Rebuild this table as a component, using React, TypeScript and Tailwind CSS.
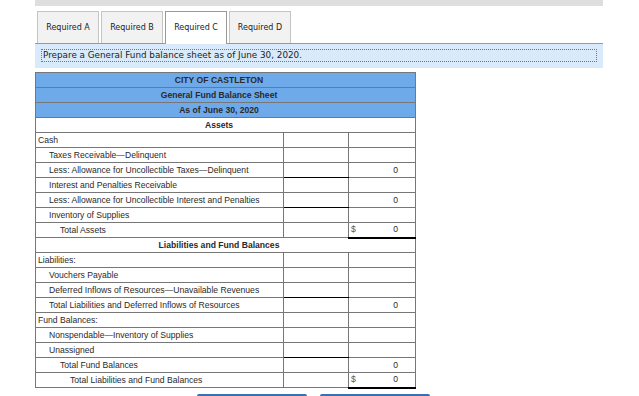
import React from 'react';

type Row = {
  label: string;
  indent?: number;
  span?: 'head' | 'section';
  c2Bottom?: boolean;
  total?: boolean;
  value?: string;
};

const rows: Row[] = [
  { label: 'Assets', span: 'section' },
  { label: 'Cash', indent: 0 },
  { label: 'Taxes Receivable\u2014Delinquent', indent: 1 },
  { label: 'Less: Allowance for Uncollectible Taxes\u2014Delinquent', indent: 1, c2Bottom: true, value: '0' },
  { label: 'Interest and Penalties Receivable', indent: 1 },
  { label: 'Less: Allowance for Uncollectible Interest and Penalties', indent: 1, c2Bottom: true, value: '0' },
  { label: 'Inventory of Supplies', indent: 1 },
  { label: 'Total Assets', indent: 2, total: true, value: '0' },
  { label: 'Liabilities and Fund Balances', span: 'section' },
  { label: 'Liabilities:', indent: 0 },
  { label: 'Vouchers Payable', indent: 1 },
  { label: 'Deferred Inflows of Resources\u2014Unavailable Revenues', indent: 1, c2Bottom: true },
  { label: 'Total Liabilities and Deferred Inflows of Resources', indent: 1, value: '0' },
  { label: 'Fund Balances:', indent: 0 },
  { label: 'Nonspendable\u2014Inventory of Supplies', indent: 1 },
  { label: 'Unassigned', indent: 1, c2Bottom: true },
  { label: 'Total Fund Balances', indent: 2, value: '0' },
  { label: 'Total Liabilities and Fund Balances', indent: 3, total: true, value: '0' },
];

const indentClass = ['pl-[2px]', 'pl-[13px]', 'pl-[24px]', 'pl-[34px]'];

const tabs = ['Required A', 'Required B', 'Required C', 'Required D'];

export default function App() {
  return (
    <div className="w-[639px] h-[396px] overflow-hidden bg-white">
      <div className="ml-[35px] w-[568px]">
        <div className="h-[6px] bg-[#dedede]" />

        {/* Tabs */}
        <div className="mt-[5px] flex gap-[2px] pl-[2px] font-['DejaVu_Sans',sans-serif] text-[8px] text-[#222]">
          {tabs.map((t) => {
            const active = t === 'Required C';
            return (
              <div
                key={t}
                className={
                  active
                    ? 'relative z-10 flex h-[33px] w-[62px] items-center justify-center border border-b-0 border-[#999] bg-white pb-[1px]'
                    : 'flex h-[32px] w-[62px] items-center justify-center border border-b-0 border-[#c4c4c4] bg-[#f2f2f2]'
                }
              >
                {t}
              </div>
            );
          })}
        </div>

        {/* Instruction */}
        <div className="-mt-[1px] h-[25px] border-t border-[#999] bg-[#d9ebfa] pl-[6px] pr-[6px] pt-[5px]">
          <div className="flex h-[13px] items-center border border-dotted border-[#3f7fcf] pl-[1px] font-['DejaVu_Sans',sans-serif] text-[8.8px] text-[#222]">
            Prepare a General Fund balance sheet as of June 30, 2020.
          </div>
        </div>

        {/* Balance sheet */}
        <table className="mt-[4px] w-[380px] table-fixed border-collapse font-['Liberation_Sans',Arial,sans-serif] text-[8.6px] text-[#2a2a2a]">
          <colgroup>
            <col className="w-[248px]" />
            <col className="w-[65px]" />
            <col className="w-[67px]" />
          </colgroup>
          <tbody>
            {['CITY OF CASTLETON', 'General Fund Balance Sheet', 'As of June 30, 2020'].map((h) => (
              <tr key={h} className="h-[15px]">
                <td colSpan={3} className="border border-[#777] bg-[#6ea9e9] p-0 pr-[13px] text-center font-bold">
                  {h}
                </td>
              </tr>
            ))}
            {rows.map((r) =>
              r.span === 'section' ? (
                <tr key={r.label} className="h-[15px]">
                  <td colSpan={3} className="border border-[#777] p-0 pr-[13px] text-center font-bold">
                    {r.label}
                  </td>
                </tr>
              ) : (
                <tr key={r.label} className="h-[15px]">
                  <td className={`border border-[#777] p-0 ${indentClass[r.indent ?? 0]}`}>{r.label}</td>
                  <td className={`border border-[#777] p-0 ${r.c2Bottom ? 'border-b-black' : ''}`} />
                  <td
                    className={`border border-[#777] p-0 ${
                      r.total ? 'border-t-black border-b-2 border-b-black' : ''
                    }`}
                  >
                    <div className="flex items-center justify-between pl-[2px] pr-[17px]">
                      <span className="text-[#555]">{r.total ? '$' : ''}</span>
                      <span>{r.value ?? ''}</span>
                    </div>
                  </td>
                </tr>
              )
            )}
          </tbody>
        </table>
      </div>

      {/* Buttons peeking at the bottom */}
      <div className="mt-[5px] flex gap-[13px] pl-[197px]">
        <div className="h-[20px] w-[110px] rounded-t-[2px] border-t-2 border-[#3a6fb0] bg-white" />
        <div className="h-[20px] w-[110px] rounded-t-[2px] border-t-2 border-[#3a6fb0] bg-white" />
      </div>
    </div>
  );
}
